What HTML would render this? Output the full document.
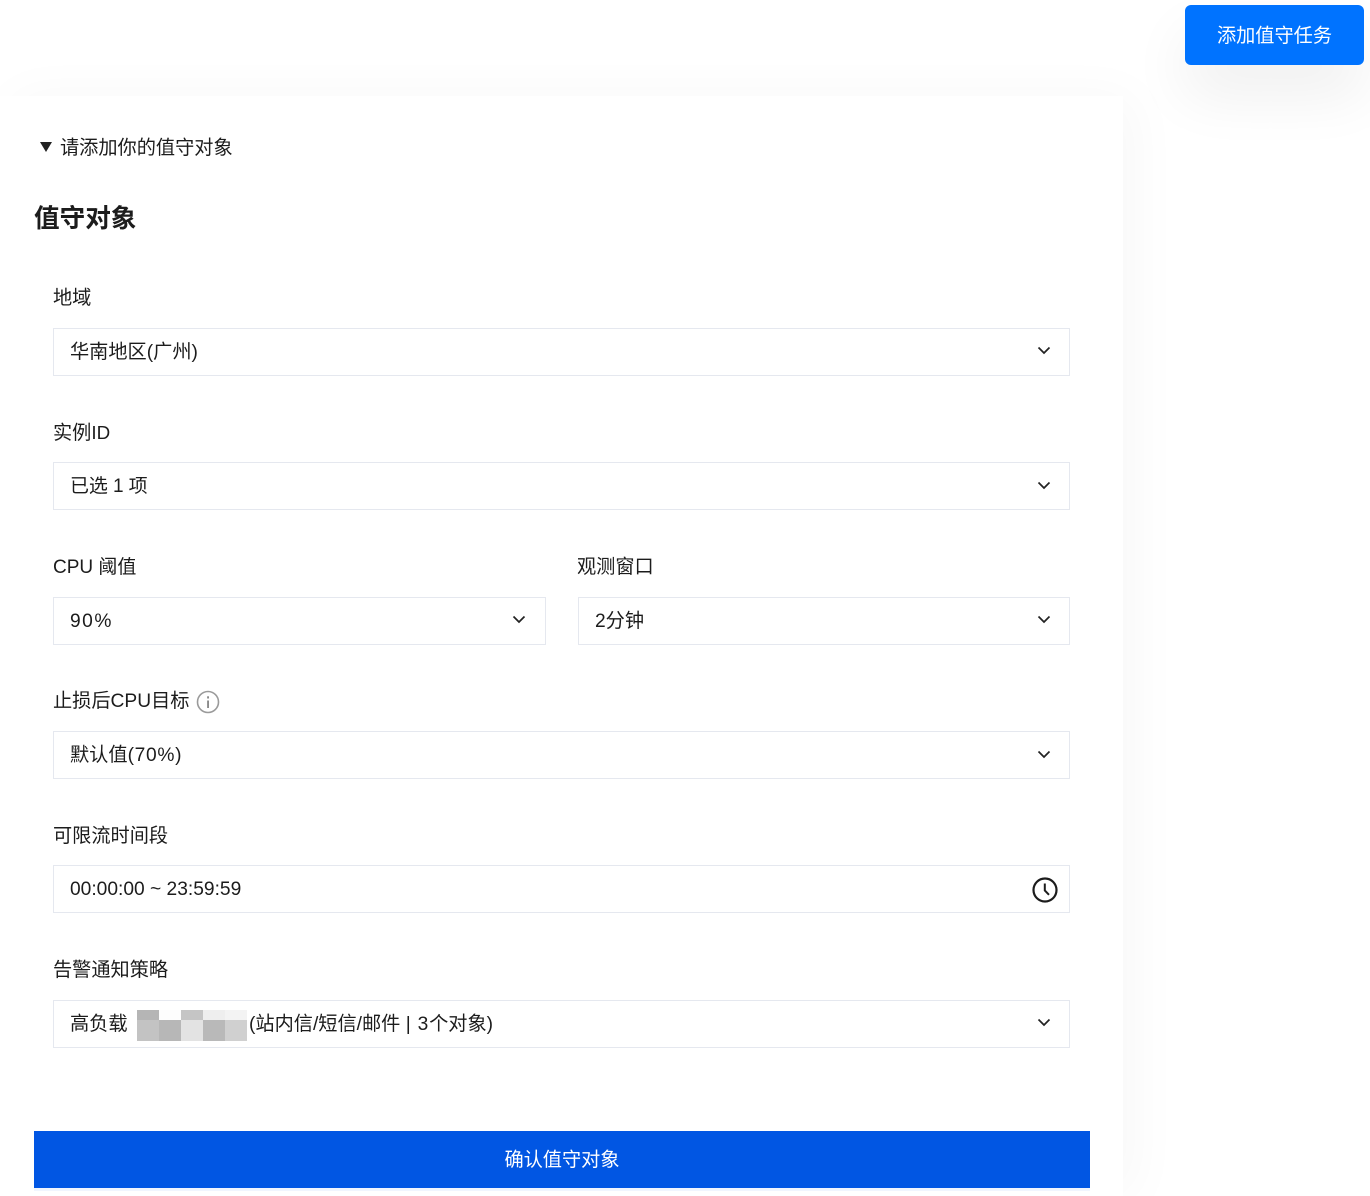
<!DOCTYPE html>
<html lang="zh-CN">
<head>
<meta charset="utf-8">
<title>值守对象</title>
<style>
html,body{margin:0;padding:0;background:#fff;}
body{position:relative;width:1370px;height:1196px;overflow:hidden;font-family:"Liberation Sans","Noto Sans CJK SC",sans-serif;color:#1c1c1c;font-size:19.2px;}
.panel{position:absolute;left:0;top:96px;width:1123px;height:1100px;background:#fff;box-shadow:12px 0 50px rgba(0,0,0,.03);}
.top-btn{position:absolute;left:1185px;top:5px;width:179px;height:60px;background:#0073ff;border-radius:6px;color:#fff;text-align:center;line-height:64px;font-size:19.2px;box-shadow:0 30px 60px rgba(0,0,0,.065);}
.t{position:absolute;white-space:nowrap;line-height:28px;}
.box{position:absolute;box-sizing:border-box;height:48px;border:1px solid #e5e8ef;background:#fff;line-height:47px;padding-left:16px;white-space:nowrap;}
.chev{position:absolute;width:14px;height:9px;}
.tri{position:absolute;left:40px;top:142px;width:0;height:0;border-left:6.5px solid transparent;border-right:6.5px solid transparent;border-top:10px solid #222;}
h2{position:absolute;left:34px;top:202px;margin:0;font-size:25.6px;line-height:34px;font-weight:700;white-space:nowrap;}
.submit{position:absolute;left:34px;top:1131px;width:1056px;height:57px;background:#0156e3;color:#fff;text-align:center;line-height:59px;font-size:19.2px;}
.strip{position:absolute;left:34px;top:1188px;width:1056px;height:3px;background:#f0f5fe;}
.m{position:absolute;}
</style>
</head>
<body>
<div class="panel"></div>
<div class="top-btn">添加值守任务</div>

<div class="tri"></div>
<div class="t" style="left:60px;top:133px;font-size:19.2px;margin-top:2px">请添加你的值守对象</div>
<h2>值守对象</h2>

<div class="t" style="left:53px;top:285px">地域</div>
<div class="box" style="left:53px;top:328px;width:1017px">华南地区(广州)</div>
<svg class="chev" style="left:1037px;top:346px" viewBox="0 0 14 9"><path d="M1.500 1.500 7 7l5.500-5.500" fill="none" stroke="#222" stroke-width="1.700"/></svg>

<div class="t" style="left:53px;top:419px">实例<span style="font-size:18.800px">ID</span></div>
<div class="box" style="left:53px;top:462px;width:1017px;font-size:19px;letter-spacing:-.1px">已选 1 项</div>
<svg class="chev" style="left:1037px;top:481px" viewBox="0 0 14 9"><path d="M1.500 1.500 7 7l5.500-5.500" fill="none" stroke="#222" stroke-width="1.700"/></svg>

<div class="t" style="left:53px;top:554px;font-size:19px">CPU 阈值</div>
<div class="box" style="left:53px;top:597px;width:493px"><span style="letter-spacing:1.500px">90%</span></div>
<svg class="chev" style="left:512px;top:615px" viewBox="0 0 14 9"><path d="M1.500 1.500 7 7l5.500-5.500" fill="none" stroke="#222" stroke-width="1.700"/></svg>

<div class="t" style="left:577px;top:554px">观测窗口</div>
<div class="box" style="left:578px;top:597px;width:492px">2分钟</div>
<svg class="chev" style="left:1037px;top:615px" viewBox="0 0 14 9"><path d="M1.500 1.500 7 7l5.500-5.500" fill="none" stroke="#222" stroke-width="1.700"/></svg>

<div class="t" style="left:53px;top:688px">止损后CPU目标</div>
<svg style="position:absolute;left:196px;top:690px" width="24" height="24" viewBox="0 0 24 24"><circle cx="12" cy="12" r="10.500" fill="none" stroke="#9a9a9a" stroke-width="1.600"/><rect x="11.100" y="10.500" width="1.900" height="7.500" fill="#8a8a8a"/><rect x="11.100" y="6.300" width="1.900" height="2.200" fill="#8a8a8a"/></svg>
<div class="box" style="left:53px;top:731px;width:1017px">默认值<span style="letter-spacing:.7px">(70%)</span></div>
<svg class="chev" style="left:1037px;top:750px" viewBox="0 0 14 9"><path d="M1.500 1.500 7 7l5.500-5.500" fill="none" stroke="#222" stroke-width="1.700"/></svg>

<div class="t" style="left:53px;top:823px">可限流时间段</div>
<div class="box" style="left:53px;top:865px;width:1017px;line-height:48px">00:00:00 ~ 23:59:59</div>
<svg style="position:absolute;left:1031px;top:876px" width="28" height="28" viewBox="0 0 28 28"><circle cx="14" cy="14" r="11.500" fill="none" stroke="#1c1c1c" stroke-width="2.200"/><path d="M13.800 7.500V14.500L18 18.800" fill="none" stroke="#1c1c1c" stroke-width="2"/></svg>

<div class="t" style="left:53px;top:957px">告警通知策略</div>
<div class="box" style="left:53px;top:1000px;width:1017px">高负载</div>
<div class="m" style="left:137px;top:1010px;width:22px;height:10px;background:#b5b5b5"></div>
<div class="m" style="left:159px;top:1010px;width:22px;height:10px;background:#fdfdfd"></div>
<div class="m" style="left:181px;top:1010px;width:22px;height:10px;background:#c5c5c5"></div>
<div class="m" style="left:203px;top:1010px;width:22px;height:10px;background:#eeeeee"></div>
<div class="m" style="left:225px;top:1010px;width:22px;height:10px;background:#f3f3f3"></div>
<div class="m" style="left:137px;top:1020px;width:22px;height:21px;background:#c3c3c3"></div>
<div class="m" style="left:159px;top:1020px;width:22px;height:21px;background:#b7b7b7"></div>
<div class="m" style="left:181px;top:1020px;width:22px;height:21px;background:#e3e3e3"></div>
<div class="m" style="left:203px;top:1020px;width:22px;height:21px;background:#b9b9b9"></div>
<div class="m" style="left:225px;top:1020px;width:22px;height:21px;background:#d0d0d0"></div>
<div class="t" style="left:249px;top:1011px">(站内信/短信/邮件 <span style="letter-spacing:.8px">| 3</span>个对象)</div>
<svg class="chev" style="left:1037px;top:1018px" viewBox="0 0 14 9"><path d="M1.500 1.500 7 7l5.500-5.500" fill="none" stroke="#222" stroke-width="1.700"/></svg>

<div class="submit">确认值守对象</div>
<div class="strip"></div>
</body>
</html>
